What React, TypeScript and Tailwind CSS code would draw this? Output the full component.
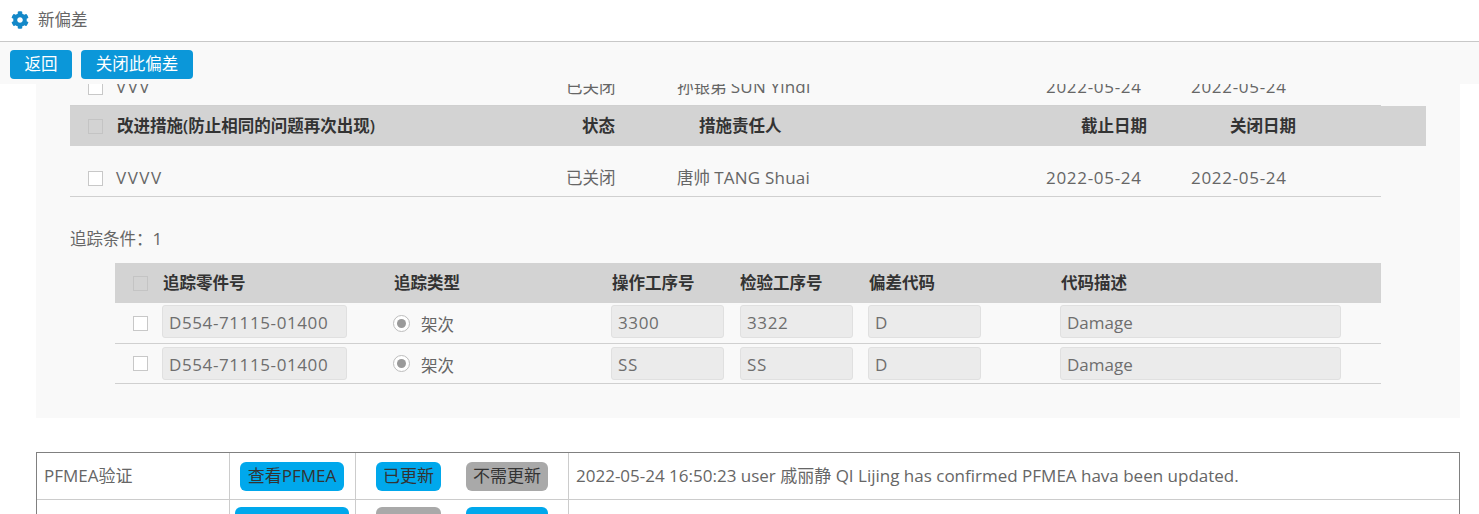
import { FaCog } from "react-icons/fa";

const actionCols = "grid grid-cols-[46px_450px_111px_369px_145px_1fr] items-center";
const traceCols = "grid grid-cols-[47px_231px_218px_129px_128px_192px_281px] items-center";

const Check = ({ muted }: { muted?: boolean }) => (
  <span
    className={`block w-[15px] h-[15px] border ${muted ? "border-[#c4c4c4] bg-[#d3d3d3]" : "border-[#c8c8c8] bg-white"}`}
  />
);

const Field = ({ value, className }: { value: string; className: string }) => (
  <div
    className={`h-[33px] rounded-[3px] border border-[#e0e0e0] bg-[#ebebeb] pl-[6px] leading-[33px] text-[17px] text-[#6e6e6e] ${className}`}
  >
    {value}
  </div>
);

const ActionRow = ({ title, owner, name }: { title: string; owner: string; name: string }) => (
  <div className={`${actionCols} w-[1311px] h-[51px] pt-[14px] border-b border-[#d0d0d0] text-[#666]`}>
    <div className="pl-[18px]">
      <Check />
    </div>
    <div className="text-[17px] tracking-[1.5px]">{title}</div>
    <div>已关闭</div>
    <div>
      {owner} <span className="text-[17px] tracking-[0.2px]">{name}</span>
    </div>
    <div className="text-[17px] tracking-[0.7px]">2022-05-24</div>
    <div className="text-[17px] tracking-[0.7px]">2022-05-24</div>
  </div>
);

const TraceRow = ({ part, op, insp, rowClass, fieldClass }: { part: string; op: string; insp: string; rowClass: string; fieldClass: string }) => (
  <div className={`${traceCols} ${rowClass} border-b border-[#d0d0d0] text-[#666]`}>
    <div className="pl-[18px]">
      <Check />
    </div>
    <Field value={part} className={`w-[185px] tracking-[0.6px] ${fieldClass}`} />
    <div className="flex items-center gap-[11px]">
      <span className="flex items-center justify-center w-[17px] h-[17px] rounded-full border border-[#bdbdbd] bg-white">
        <span className="block w-[9px] h-[9px] rounded-full bg-[#9a9a9a]" />
      </span>
      <span className="mt-[5px]">架次</span>
    </div>
    <Field value={op} className={`w-[113px] tracking-[0.6px] ${fieldClass}`} />
    <Field value={insp} className={`w-[113px] tracking-[0.6px] ${fieldClass}`} />
    <Field value="D" className={`w-[113px] ${fieldClass}`} />
    <Field value="Damage" className={`w-[281px] ${fieldClass}`} />
  </div>
);

const Pill = ({ label, gray, className }: { label: string; gray?: boolean; className: string }) => (
  <button
    className={`h-[29px] rounded-[6px] text-center text-[#333] text-[17px] ${gray ? "bg-[#a9a9a9]" : "bg-[#00a8ec]"} ${className}`}
  >
    {label}
  </button>
);

export default function App() {
  return (
    <div className="h-[514px] overflow-hidden bg-white flex flex-col text-[16.5px] font-['Open_Sans','Noto_Sans_CJK_SC',sans-serif]">
      <header className="h-[42px] shrink-0 flex items-center gap-[9px] pl-[11px] pb-[1px] border-b border-[#c8c8c8] text-[#666]">
        <FaCog className="w-[18px] h-[18px] text-[#1388c8]" />
        <span>新偏差</span>
      </header>

      <div className="h-[42px] shrink-0 flex items-start gap-[9px] pl-[10px] pt-[8px] bg-[#f9f9f9]">
        <button className="w-[62px] h-[29px] rounded-[4px] bg-[#0b97d9] text-white">返回</button>
        <button className="w-[112px] h-[29px] rounded-[4px] bg-[#0b97d9] text-white">关闭此偏差</button>
      </div>

      <div className="flex-1 overflow-hidden">
        <section className="mx-[36px] -mt-[29px] w-[1424px] h-[363px] pl-[34px] bg-[#f9f9f9]">
          <ActionRow title="VVV" owner="孙银弟" name="SUN Yindi" />

          <div className={`${actionCols} w-[1356px] h-[40px] bg-[#d3d3d3] font-semibold text-[#333]`}>
            <div className="pl-[18px]">
              <Check muted />
            </div>
            <div className="pl-[1px]">改进措施(防止相同的问题再次出现)</div>
            <div className="pl-[16px]">状态</div>
            <div className="pl-[22px]">措施责任人</div>
            <div className="pl-[35px]">截止日期</div>
            <div className="pl-[39px]">关闭日期</div>
          </div>

          <ActionRow title="VVVV" owner="唐帅" name="TANG Shuai" />

          <div className="mt-[30px] h-[24px] leading-[24px] text-[#666]">
            追踪条件：<span className="text-[17px]">1</span>
          </div>

          <div className="ml-[45px] mt-[12px] w-[1266px]">
            <div className={`${traceCols} h-[40px] bg-[#d3d3d3] font-semibold text-[#333]`}>
              <div className="pl-[18px]">
                <Check muted />
              </div>
              <div className="pl-[1px]">追踪零件号</div>
              <div className="pl-[1px]">追踪类型</div>
              <div className="pl-[1px]">操作工序号</div>
              <div>检验工序号</div>
              <div className="pl-[1px]">偏差代码</div>
              <div className="pl-[1px]">代码描述</div>
            </div>
            <TraceRow part="D554-71115-01400" op="3300" insp="3322" rowClass="h-[41px]" fieldClass="self-start mt-[2px]" />
            <TraceRow part="D554-71115-01400" op="SS" insp="SS" rowClass="h-[40px]" fieldClass="self-start mt-[3px]" />
          </div>
        </section>

        <div className="mx-[36px] mt-[34px] w-[1424px] border-t border-x border-[#808080] text-[#666]">
          <div className="grid grid-cols-[193px_126px_213px_1fr] h-[47px] border-b border-[#ccc]">
            <div className="flex items-center pl-[7px] border-r border-[#ccc] text-[17px]">PFMEA验证</div>
            <div className="flex items-center pl-[10px] border-r border-[#ccc]">
              <Pill label="查看PFMEA" className="w-[104px]" />
            </div>
            <div className="flex items-center pl-[20px] gap-[25px] border-r border-[#ccc]">
              <Pill label="已更新" className="w-[65px]" />
              <Pill label="不需更新" gray className="w-[82px]" />
            </div>
            <div className="flex items-center pl-[7px] text-[17px]">
              2022-05-24 16:50:23 user 戚丽静 QI Lijing has confirmed PFMEA hava been updated.
            </div>
          </div>
          <div className="grid grid-cols-[193px_126px_213px_1fr] h-[46px]">
            <div className="border-r border-[#ccc]" />
            <div className="pl-[5px] pt-[7px] border-r border-[#ccc]">
              <div className="w-[114px] h-[29px] rounded-[6px] bg-[#00a8ec]" />
            </div>
            <div className="flex pl-[20px] pt-[7px] gap-[25px] border-r border-[#ccc]">
              <div className="w-[65px] h-[29px] rounded-[6px] bg-[#a9a9a9]" />
              <div className="w-[82px] h-[29px] rounded-[6px] bg-[#00a8ec]" />
            </div>
            <div />
          </div>
        </div>
      </div>
    </div>
  );
}
